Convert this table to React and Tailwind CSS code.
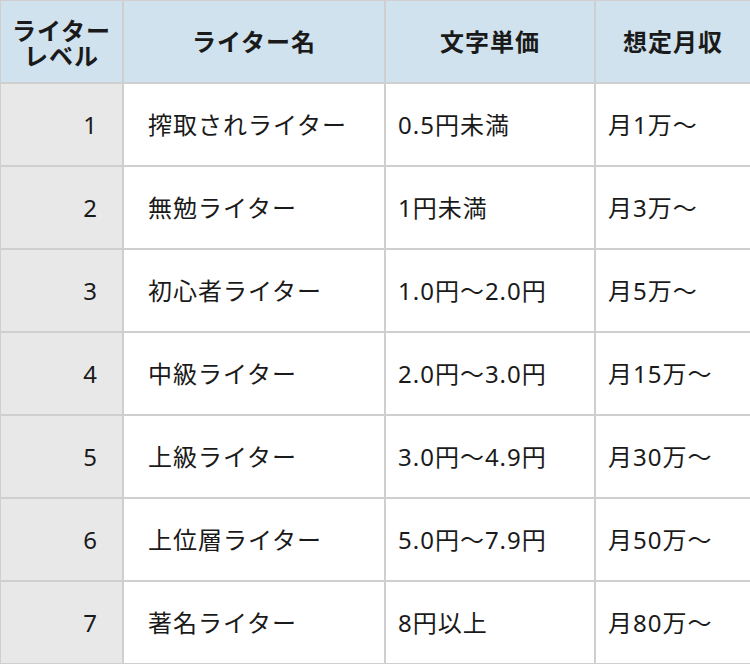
import React from 'react';

const rows = [
    { level: '1', name: '搾取されライター', price: '0.5円未満', income: '月1万〜' },
    { level: '2', name: '無勉ライター', price: '1円未満', income: '月3万〜' },
    { level: '3', name: '初心者ライター', price: '1.0円〜2.0円', income: '月5万〜' },
    { level: '4', name: '中級ライター', price: '2.0円〜3.0円', income: '月15万〜' },
    { level: '5', name: '上級ライター', price: '3.0円〜4.9円', income: '月30万〜' },
    { level: '6', name: '上位層ライター', price: '5.0円〜7.9円', income: '月50万〜' },
    { level: '7', name: '著名ライター', price: '8円以上', income: '月80万〜' },
];

const font = { fontFamily: '"Noto Sans", "Noto Sans CJK JP", sans-serif' };

const App = () => {
    return (
        <div
            className="w-[750px] h-[664px] bg-[#cfcfcf] pt-px pl-px pb-px grid grid-cols-[121px_260px_208px_154px] grid-rows-[repeat(8,81px)] gap-[2px] text-[24px] text-[#1a1a1a] tracking-[1px]"
            style={font}
        >
            <div className="bg-[#d0e2ed] flex flex-col items-center justify-center text-center font-semibold leading-[25px] pt-[2px]">
                <span>ライター</span>
                <span>レベル</span>
            </div>
            <div className="bg-[#d0e2ed] flex items-center justify-center font-semibold">ライター名</div>
            <div className="bg-[#d0e2ed] flex items-center justify-center font-semibold">文字単価</div>
            <div className="bg-[#d0e2ed] flex items-center justify-center font-semibold">想定月収</div>

            {rows.map((row) => (
                <React.Fragment key={row.level}>
                    <div className="bg-[#e8e8e8] flex items-center justify-end pr-[24px]">{row.level}</div>
                    <div className="bg-white flex items-center pl-6">{row.name}</div>
                    <div className="bg-white flex items-center pl-3">{row.price}</div>
                    <div className="bg-white flex items-center pl-3">{row.income}</div>
                </React.Fragment>
            ))}
        </div>
    );
};

export default App;
